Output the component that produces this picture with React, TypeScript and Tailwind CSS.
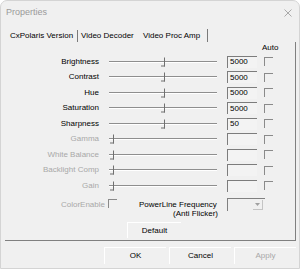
import React from "react";

const rows = [
  { label: "Brightness", value: "5000", on: true },
  { label: "Contrast", value: "5000", on: true },
  { label: "Hue", value: "5000", on: true },
  { label: "Saturation", value: "5000", on: true },
  { label: "Sharpness", value: "50", on: true },
  { label: "Gamma", value: "", on: false },
  { label: "White Balance", value: "", on: false },
  { label: "Backlight Comp", value: "", on: false },
  { label: "Gain", value: "", on: false },
];

function Check() {
  return <div className="w-[9px] h-[9px] border-t border-l border-[#8a8a8a] border-b-white border-r-white" />;
}

function Slider({ on }: { on: boolean }) {
  return (
    <div className="relative w-[108px] h-full flex items-center">
      <div className="w-full h-[2px] border-t border-[#8e8e8e] border-b border-b-white" />
      {/* thumb: only its shadow edges show */}
      <div
        className={`absolute top-1/2 -translate-y-1/2 w-[4px] h-[9px] border-r border-b border-[#707070] ${
          on ? "left-[52px]" : "left-[1px]"
        }`}
      />
    </div>
  );
}

export default function App() {
  return (
    <div className="w-[300px] h-[269px] bg-[#f0f0f0] border border-[#d4d4d4] rounded-t-[7px] overflow-hidden font-['Liberation_Sans',Arial,sans-serif] text-[8px] text-black">
      {/* Title bar */}
      <div className="h-[23px] flex items-center justify-between pl-[5px] pr-[6px]">
        <span className="text-[9px] text-[#9a9a9a]">Properties</span>
        <svg width="8" height="8" viewBox="0 0 8 8" className="mr-[1px]">
          <path d="M0.5 0.5 L7.5 7.5 M7.5 0.5 L0.5 7.5" stroke="#a0a0a0" strokeWidth="0.9" />
        </svg>
      </div>

      {/* Tabs */}
      <div className="h-[18px] flex items-end pl-[4px]">
        <div className="w-[73px] h-[12px] pl-[5px] border-r border-[#7a7a7a] flex items-center leading-none">
          CxPolaris Version
        </div>
        <div className="w-[59px] h-[12px] pl-[3px] flex items-center leading-none">Video Decoder</div>
        <div className="w-[71px] h-[13px] pl-[6px] border-r border-[#7a7a7a] flex items-center leading-none">
          Video Proc Amp
        </div>
      </div>

      {/* Panel */}
      <div className="ml-[4px] w-[291px] h-[199px] border-r border-b border-[#808080]">
        <div className="h-[12px] pl-[257px] flex items-center leading-none">Auto</div>
        {rows.map((r) => (
          <div key={r.label} className="h-[15.5px] flex items-center">
            <div className={`w-[94px] text-right leading-none ${r.on ? "text-black" : "text-[#a8a8a8]"}`}>
              {r.label}
            </div>
            <div className="ml-[10px] h-full">
              <Slider on={r.on} />
            </div>
            <div className="ml-[10px] w-[30px] h-[12px] pl-[2px] border-t border-l border-[#7c7c7c] border-b-white border-r-white bg-[#f3f3f3] flex items-center leading-none">
              {r.value}
            </div>
            <div className="ml-[7px]">
              <Check />
            </div>
          </div>
        ))}

        <div className="h-[26px] flex items-start">
          <div className="w-[100px] mt-[6px] text-right leading-[9px] text-[#a8a8a8]">ColorEnable</div>
          <div className="ml-[3px] mt-[5.5px]">
            <Check />
          </div>
          <div className="ml-[22px] w-[79px] mt-[6px] leading-[9px]">
            <div className="whitespace-nowrap">PowerLine Frequency</div>
            <div className="text-right">(Anti Flicker)</div>
          </div>
          <div className="ml-[9px] mt-[4.5px] w-[38px] h-[13px] p-[1px] border-t border-l border-[#808080] border-b-white border-r-white flex justify-end">
            <div className="w-[10px] h-full mr-[1px] border-r border-b border-[#c4c4c4] flex items-center justify-center">
              <svg width="5" height="3" viewBox="0 0 5 3">
                <path d="M0 0 L5 0 L2.5 3 Z" fill="#a0a0a0" />
              </svg>
            </div>
          </div>
        </div>

        <div className="mt-[2.5px] ml-[122px] w-[54px] h-[16px] border-t border-l border-white border-r-[#6a6a6a] border-b-[#6a6a6a] flex items-center justify-center leading-none">
          Default
        </div>
      </div>

      {/* Bottom buttons */}
      <div className="mt-[6px] flex justify-end gap-[3px] pr-[3px]">
        {[
          { t: "OK", on: true },
          { t: "Cancel", on: true },
          { t: "Apply", on: false },
        ].map((b) => (
          <div
            key={b.t}
            className={`w-[62px] h-[17px] border-t border-l border-white border-r-[#6a6a6a] border-b-[#6a6a6a] flex items-center justify-center leading-none ${
              b.on ? "text-black" : "text-[#a8a8a8]"
            }`}
          >
            {b.t}
          </div>
        ))}
      </div>
    </div>
  );
}
